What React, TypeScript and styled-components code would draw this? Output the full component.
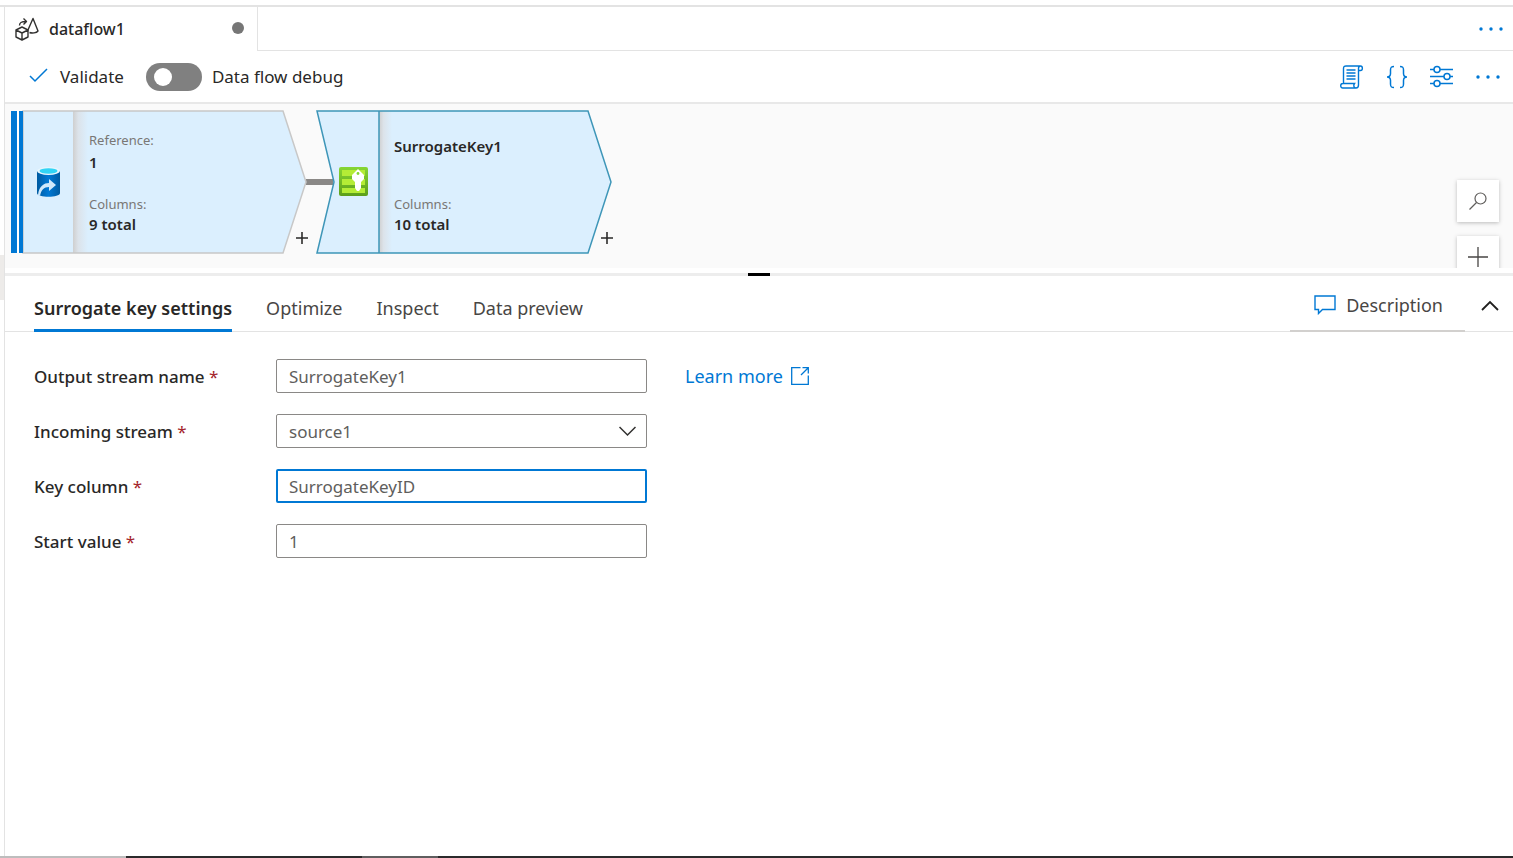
import React from "react";
import styled, { createGlobalStyle } from "styled-components";

const BLUE = "#0078d4";
const LINE = "#e3e3e3";

const GlobalStyle = createGlobalStyle`
  *, *::before, *::after { box-sizing: border-box; }
  body {
    margin: 0;
    background: #fff;
    color: #292827;
    font-family: "Noto Sans", "Open Sans", sans-serif;
    font-size: 17px;
  }
  button, input, select { font: inherit; color: inherit; }
`;

const Screen = styled.div`
  display: flex;
  flex-direction: column;
  min-height: 100vh;
  padding-top: 5px;
`;

const Body = styled.div`
  flex: 1;
  display: grid;
  grid-template-columns: 5px minmax(0, 1fr);
  border-top: 2px solid ${LINE};
`;

const Rail = styled.div`
  border-right: 1px solid ${LINE};
  padding-top: 248px;
`;

const RailThumb = styled.div`
  height: 45px;
  background: #edebe9;
`;

const Main = styled.main`
  display: flex;
  flex-direction: column;
`;

const IconButton = styled.button`
  display: flex;
  padding: 0;
  border: 0;
  background: none;
  cursor: pointer;
`;

const FileBar = styled.header`
  display: flex;
  height: 44px;
`;

const FileTab = styled.div`
  display: flex;
  align-items: center;
  gap: 10px;
  width: 253px;
  padding: 0 13px 0 10px;
  border-right: 1px solid ${LINE};
  font-size: 16px;
  font-weight: 500;
`;

const FileName = styled.span`
  flex: 1;
  line-height: 46px;
`;

const UnsavedDot = styled.span`
  width: 12px;
  height: 12px;
  margin-bottom: 2px;
  border-radius: 50%;
  background: #767676;
`;

const FileBarRest = styled.div`
  flex: 1;
  display: flex;
  justify-content: flex-end;
  align-items: center;
  padding-right: 10px;
  border-bottom: 1px solid ${LINE};
`;

const Toolbar = styled.div`
  display: flex;
  align-items: center;
  height: 53px;
  padding: 0 13px 0 24px;
  border-bottom: 2px solid #e8e8e8;
`;

const ValidateButton = styled(IconButton)`
  align-items: center;
  gap: 10px;
  margin-right: 22px;
`;

const SwitchLabel = styled.label`
  display: flex;
  align-items: center;
  gap: 10px;
`;

const Switch = styled.input`
  appearance: none;
  display: flex;
  align-items: center;
  width: 56px;
  height: 28px;
  margin: 0;
  padding: 0 8px;
  border-radius: 14px;
  background: #808080;

  &::before {
    content: "";
    width: 18px;
    height: 18px;
    border-radius: 50%;
    background: #fff;
  }

  &:checked {
    justify-content: flex-end;
    background: ${BLUE};
  }
`;

const ToolbarIcons = styled.div`
  display: flex;
  align-items: center;
  gap: 22px;
  margin-left: auto;
`;

const Canvas = styled.section`
  position: relative;
  height: 164px;
  overflow: hidden;
  background: #fafafa;
`;

const NodeBox = styled.article<{ $left: number }>`
  position: absolute;
  top: 6px;
  left: ${(p) => p.$left}px;
  width: 298px;
  height: 144px;
`;

const NodeShape = styled.svg`
  position: absolute;
  inset: 0;
`;

const NodeText = styled.div<{ $titled?: boolean }>`
  position: relative;
  display: flex;
  flex-direction: column;
  height: 100%;
  padding: ${(p) => (p.$titled ? "24px" : "20px")} 0 20px 78px;
  font-size: 15px;
  line-height: 24px;
`;

const NodeLabel = styled.span<{ $push?: boolean }>`
  margin-top: ${(p) => (p.$push ? "auto" : "0")};
  color: #797775;
  font-size: 13px;
  line-height: 20px;
`;

const NodeValue = styled.span<{ $tight?: boolean }>`
  font-weight: 600;
  line-height: ${(p) => (p.$tight ? "20px" : "24px")};
`;

const AddStep = styled(IconButton)`
  position: absolute;
  right: 1px;
  bottom: 10px;
`;

const Connector = styled.div`
  position: absolute;
  top: 75px;
  left: 301px;
  width: 27px;
  height: 6px;
  background: #8a8886;
`;

const CanvasTools = styled.div`
  position: absolute;
  top: 76px;
  right: 14px;
  display: flex;
  flex-direction: column;
  gap: 14px;
`;

const CanvasTool = styled(IconButton)`
  align-items: center;
  justify-content: center;
  width: 42px;
  height: 42px;
  background: #fff;
  box-shadow: 0 1px 4px rgba(0, 0, 0, 0.25);
`;

const Splitter = styled.div`
  display: flex;
  justify-content: center;
  margin-top: 5px;
  height: 3px;
  background: #ededed;
`;

const SplitterGrip = styled.div`
  width: 22px;
  background: #000;
`;

const PanelBar = styled.div`
  display: flex;
  height: 56px;
  padding-left: 29px;
  border-bottom: 1px solid ${LINE};
  font-size: 18px;
`;

const TabList = styled.div`
  display: flex;
  gap: 34px;
  height: 56px;
`;

const Tab = styled.button<{ $active?: boolean }>`
  padding: 10px 0 0;
  border: 0;
  border-bottom: 3px solid ${(p) => (p.$active ? BLUE : "transparent")};
  background: none;
  color: ${(p) => (p.$active ? "#292827" : "#484644")};
  font-weight: ${(p) => (p.$active ? 600 : 400)};
`;

const DescriptionButton = styled.button`
  display: flex;
  align-items: center;
  gap: 10px;
  height: 56px;
  margin-left: auto;
  padding: 4px 22px 0 24px;
  border: 0;
  border-bottom: 2px solid #d2d0ce;
  background: none;
  color: #484644;
`;

const CollapseButton = styled(IconButton)`
  align-items: center;
  padding: 4px 14px 0 16px;
`;

const Form = styled.form`
  display: flex;
  flex-direction: column;
  gap: 21px;
  padding: 27px 29px;
`;

const FieldRow = styled.div`
  display: grid;
  grid-template-columns: 242px 371px auto;
  align-items: center;
  justify-content: start;
  height: 34px;
`;

const FieldLabel = styled.label`
  font-weight: 500;
`;

const Required = styled.span`
  color: #a4262c;
  font-weight: 400;
`;

const TextBox = styled.input<{ $active?: boolean }>`
  width: 100%;
  height: 34px;
  padding: 0 ${(p) => (p.$active ? 11 : 12)}px;
  border: ${(p) => (p.$active ? `2px solid ${BLUE}` : "1px solid #8a8886")};
  border-radius: 2px;
  outline: 0;
  background: #fff;
  color: #605e5c;
`;

const SelectWrap = styled.div`
  position: relative;
`;

const SelectBox = styled.select`
  appearance: none;
  display: block;
  width: 100%;
  height: 34px;
  padding: 0 40px 0 12px;
  border: 1px solid #8a8886;
  border-radius: 2px;
  background: #fff;
  color: #605e5c;
`;

const SelectChevron = styled.svg`
  position: absolute;
  top: 12px;
  right: 11px;
  pointer-events: none;
`;

const LearnMore = styled.a`
  display: flex;
  align-items: center;
  gap: 8px;
  margin-left: 38px;
  color: ${BLUE};
  font-size: 18px;
  text-decoration: none;
`;

const Taskbar = styled.footer`
  display: grid;
  grid-template-columns: 126px 236px 76px minmax(0, 1fr);
  height: 2px;
`;

const TaskbarPart = styled.div<{ $tone: string }>`
  background: ${(p) => p.$tone};
`;

const DataflowIcon = () => (
  <svg width="24" height="24" viewBox="0 0 24 24" fill="none" stroke="#323130" strokeWidth="1.4" strokeLinejoin="round">
    <path d="M1 13 7 10l6 3v7l-6 3-6-3zM1 13l6 3 6-3M7 16v7" />
    <path d="M12.500 14 18 1.500l5 12.500c-1.500 2-6 2.500-8.500 1.500" />
    <path d="M4.500 8.500C4.500 5.500 6 4.500 11 4.500M8.500 1.500l3 3-3 3" />
  </svg>
);

const MoreIcon = () => (
  <svg width="24" height="6" viewBox="0 0 24 6" fill={BLUE}>
    <circle cx="2" cy="3" r="1.7" />
    <circle cx="12" cy="3" r="1.7" />
    <circle cx="22" cy="3" r="1.7" />
  </svg>
);

const CheckIcon = () => (
  <svg width="21" height="20" viewBox="0 0 21 20" fill="none" stroke={BLUE} strokeWidth="1.5">
    <path d="m1 9 5 5L18 2" />
  </svg>
);

const ScriptIcon = () => (
  <svg width="24" height="24" viewBox="0 0 24 24" fill="none" stroke={BLUE} strokeWidth="1.4">
    <path d="M3.500 18.500V3.500C3.500 1.800 4.500 1 6 1h14.500c2.500 0 2.500 4.500 0 4.500H18.500M20.500 1c-1.500 0-2 1-2 2.500V20c0 2-1 3-2.500 3H2.800c-2.800 0-2.800-4.500 0-4.500H14.500c-1.500 2-.500 4.500 1.500 4.500" />
    <path d="M6.500 5h9M6.500 8h9M6.500 11h9M6.500 14h9" />
  </svg>
);

const BracesIcon = () => (
  <svg width="22" height="24" viewBox="0 0 22 24" fill="none" stroke={BLUE} strokeWidth="1.5">
    <path d="M8 1.500C5 1.500 4.500 2.500 4.500 5v3.500C4.500 11 3.500 12 1 12c2.500 0 3.500 1 3.500 3.500V19c0 2.500.500 3.500 3.500 3.500" />
    <path d="M14 1.500c3 0 3.500 1 3.500 3.500v3.500c0 2.500 1 3.500 3.500 3.500-2.500 0-3.500 1-3.500 3.500V19c0 2.500-.500 3.500-3.500 3.500" />
  </svg>
);

const SlidersIcon = () => (
  <svg width="24" height="24" viewBox="0 0 24 24" fill="none" stroke={BLUE} strokeWidth="1.5">
    <path d="M0 4.500h4M10 4.500h13M0 11.500h14M20 11.500h3M0 18.500h4M10 18.500h13" />
    <circle cx="7" cy="4.500" r="3" />
    <circle cx="17" cy="11.500" r="3" />
    <circle cx="7" cy="18.500" r="3" />
  </svg>
);

const PlusIcon = ({ size, color, width }: { size: number; color: string; width: number }) => (
  <svg width={size} height={size} viewBox="0 0 20 20" fill="none" stroke={color} strokeWidth={width}>
    <path d="M10 0v20M0 10h20" />
  </svg>
);

const SearchIcon = () => (
  <svg width="18" height="18" viewBox="0 0 18 18" fill="none" stroke="#605e5c" strokeWidth="1.2">
    <circle cx="11.500" cy="6.500" r="5.500" />
    <path d="M7.500 10.500.500 17.500" />
  </svg>
);

const CommentIcon = () => (
  <svg width="22" height="20" viewBox="0 0 22 20" fill="none" stroke={BLUE} strokeWidth="1.4">
    <path d="M1 1h20v13.500H8.500L4.500 18.500v-4H1z" />
  </svg>
);

const ExternalIcon = () => (
  <svg width="18" height="18" viewBox="0 0 18 18" fill="none" stroke={BLUE} strokeWidth="1.3">
    <path d="M9.500.700H.700v16.600h16.600V8.500M11.500.700h5.800v5.800M17.300.700 10 8" />
  </svg>
);

const SourceNode = () => (
  <NodeBox $left={6}>
    <NodeShape width="298" height="144" viewBox="0 0 298 144" aria-hidden="true">
      <defs>
        <linearGradient id="fold">
          <stop offset="0" stopColor="#cfcfcf" />
          <stop offset="0.35" stopColor="#dce3ea" />
          <stop offset="1" stopColor="#dbeffe" />
        </linearGradient>
        <linearGradient id="can">
          <stop offset="0" stopColor="#005ba1" />
          <stop offset="0.5" stopColor="#0078d4" />
          <stop offset="1" stopColor="#005ba1" />
        </linearGradient>
      </defs>
      <path d="M12 1h260l23 71-23 71H12z" fill="#dbeffe" />
      <rect x="62" y="1" width="15" height="142" fill="url(#fold)" />
      <path d="M12 1h260l23 71-23 71H12z" fill="none" stroke="#c8c8c8" strokeWidth="1.500" />
      <path d="M0 1h12v142H0z" fill="#fff" />
      <path d="M0 1h6v142H0zM8 1h4v142H8z" fill={BLUE} />
      <path d="M26 61v22c0 5 23 5 23 0V61z" fill="url(#can)" />
      <ellipse cx="37.500" cy="61" rx="11.500" ry="4" fill="#e8f6fd" />
      <ellipse cx="37.500" cy="61" rx="9" ry="2.700" fill="#32d4f5" />
      <path d="M27 85c1-9 6-12 11-12v-4l7 6-7 6v-4c-5 0-8 3-9 9z" fill="#cfe8fa" />
    </NodeShape>
    <NodeText>
      <NodeLabel>Reference:</NodeLabel>
      <NodeValue>1</NodeValue>
      <NodeLabel $push>Columns:</NodeLabel>
      <NodeValue $tight>9 total</NodeValue>
    </NodeText>
    <AddStep type="button" aria-label="Add step after source">
      <PlusIcon size={12} color="#292827" width={2.6} />
    </AddStep>
  </NodeBox>
);

const SurrogateNode = () => (
  <NodeBox $left={311}>
    <NodeShape width="298" height="144" viewBox="0 0 298 144" aria-hidden="true">
      <defs>
        <linearGradient id="sheet" x2="0" y2="1">
          <stop offset="0" stopColor="#86d633" />
          <stop offset="1" stopColor="#5c9e1a" />
        </linearGradient>
      </defs>
      <path d="M1 1h271l23 71-23 71H1l17-71z" fill="#dbeffe" />
      <rect x="63" y="1" width="13" height="142" fill="url(#fold)" />
      <path d="M1 1h271l23 71-23 71H1l17-71zM63 1v142" fill="none" stroke="#3e96b8" strokeWidth="1.500" />
      <rect x="23" y="57" width="29" height="29" rx="2" fill="url(#sheet)" />
      <path d="M26 60h23v6H26zM26 69h23v6H26zM26 78h23v5H26z" fill="#b4ec36" />
      <path d="m42 59 6 6v4l-3 3v6l-2 3h-2l-2-3v-6l-3-3v-4z" fill="#fff" />
      <circle cx="42" cy="63.500" r="1.400" fill="#86d633" />
    </NodeShape>
    <NodeText $titled>
      <NodeValue>SurrogateKey1</NodeValue>
      <NodeLabel $push>Columns:</NodeLabel>
      <NodeValue $tight>10 total</NodeValue>
    </NodeText>
    <AddStep type="button" aria-label="Add step after SurrogateKey1">
      <PlusIcon size={12} color="#292827" width={2.6} />
    </AddStep>
  </NodeBox>
);

const Label = ({ id, text }: { id: string; text: string }) => (
  <FieldLabel htmlFor={id}>
    {text} <Required>*</Required>
  </FieldLabel>
);

export default function App() {
  return (
    <>
      <GlobalStyle />
      <Screen>
        <Body>
          <Rail>
            <RailThumb />
          </Rail>
          <Main>
            <FileBar>
              <FileTab>
                <DataflowIcon />
                <FileName>dataflow1</FileName>
                <UnsavedDot />
              </FileTab>
              <FileBarRest>
                <IconButton type="button" aria-label="More tabs">
                  <MoreIcon />
                </IconButton>
              </FileBarRest>
            </FileBar>

            <Toolbar>
              <ValidateButton type="button">
                <CheckIcon />
                Validate
              </ValidateButton>
              <SwitchLabel>
                <Switch type="checkbox" role="switch" />
                Data flow debug
              </SwitchLabel>
              <ToolbarIcons>
                <IconButton type="button" aria-label="Script">
                  <ScriptIcon />
                </IconButton>
                <IconButton type="button" aria-label="Code">
                  <BracesIcon />
                </IconButton>
                <IconButton type="button" aria-label="Settings">
                  <SlidersIcon />
                </IconButton>
                <IconButton type="button" aria-label="More actions">
                  <MoreIcon />
                </IconButton>
              </ToolbarIcons>
            </Toolbar>

            <Canvas>
              <Connector />
              <SourceNode />
              <SurrogateNode />
              <CanvasTools>
                <CanvasTool type="button" aria-label="Search">
                  <SearchIcon />
                </CanvasTool>
                <CanvasTool type="button" aria-label="Zoom in">
                  <PlusIcon size={20} color="#484644" width={1.3} />
                </CanvasTool>
              </CanvasTools>
            </Canvas>

            <Splitter>
              <SplitterGrip />
            </Splitter>

            <PanelBar>
              <TabList role="tablist">
                <Tab type="button" role="tab" aria-selected="true" $active>
                  Surrogate key settings
                </Tab>
                <Tab type="button" role="tab">Optimize</Tab>
                <Tab type="button" role="tab">Inspect</Tab>
                <Tab type="button" role="tab">Data preview</Tab>
              </TabList>
              <DescriptionButton type="button">
                <CommentIcon />
                Description
              </DescriptionButton>
              <CollapseButton type="button" aria-label="Collapse panel">
                <svg width="18" height="12" viewBox="0 0 18 12" fill="none" stroke="#201f1e" strokeWidth="1.8">
                  <path d="m1 10 8-8 8 8" />
                </svg>
              </CollapseButton>
            </PanelBar>

            <Form>
              <FieldRow>
                <Label id="output" text="Output stream name" />
                <TextBox id="output" defaultValue="SurrogateKey1" />
                <LearnMore href="#learn">
                  Learn more
                  <ExternalIcon />
                </LearnMore>
              </FieldRow>
              <FieldRow>
                <Label id="incoming" text="Incoming stream" />
                <SelectWrap>
                  <SelectBox id="incoming">
                    <option>source1</option>
                  </SelectBox>
                  <SelectChevron width="17" height="11" viewBox="0 0 17 11" fill="none" stroke="#323130" strokeWidth="1.5">
                    <path d="m.500 1 8 8 8-8" />
                  </SelectChevron>
                </SelectWrap>
              </FieldRow>
              <FieldRow>
                <Label id="key" text="Key column" />
                <TextBox id="key" defaultValue="SurrogateKeyID" $active />
              </FieldRow>
              <FieldRow>
                <Label id="start" text="Start value" />
                <TextBox id="start" defaultValue="1" />
              </FieldRow>
            </Form>
          </Main>
        </Body>
        <Taskbar>
          <TaskbarPart $tone="#bdbdbd" />
          <TaskbarPart $tone="#2b2a2b" />
          <TaskbarPart $tone="#5f5e5f" />
          <TaskbarPart $tone="#2b2a2b" />
        </Taskbar>
      </Screen>
    </>
  );
}
